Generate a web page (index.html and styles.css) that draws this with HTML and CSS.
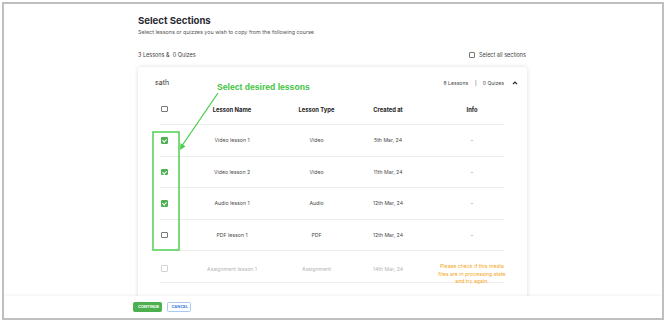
FILE: index.html
```html
<!DOCTYPE html>
<html>
<head>
<meta charset="utf-8">
<link rel="stylesheet" href="styles.css">
</head>
<body>
<div class="frame">
  <div class="main">
    <div class="col">
      <h1 class="title">Select Sections</h1>
      <p class="subtitle">Select lessons or quizzes you wish to copy from the following course</p>
      <div class="summary">
        <span>3 Lessons &amp;&nbsp; 0 Quizes</span>
        <label class="select-all"><span class="cb"></span>Select all sections</label>
      </div>
      <div class="card">
        <div class="card-head">
          <span class="sec-name">sath</span>
          <div class="counts">
            <span>8 Lessons</span><span class="sep">|</span><span>0 Quizes</span>
            <svg class="caret" width="6" height="4" viewBox="0 0 6 4"><path d="M1 3.2 L3 1.2 L5 3.2" fill="none" stroke="#222" stroke-width="1.2"/></svg>
          </div>
        </div>
        <div class="table">
          <div class="row head">
            <span class="c1"><span class="cb"></span></span>
            <span>Lesson Name</span><span>Lesson Type</span><span>Created at</span><span>Info</span>
          </div>
          <div class="row">
            <span class="c1"><span class="cb on"></span></span>
            <span>Video lesson 1</span><span>Video</span><span>5th Mar, 24</span><span>-</span>
          </div>
          <div class="row">
            <span class="c1"><span class="cb on"></span></span>
            <span>Video lesson 2</span><span>Video</span><span>11th Mar, 24</span><span>-</span>
          </div>
          <div class="row">
            <span class="c1"><span class="cb on"></span></span>
            <span>Audio lesson 1</span><span>Audio</span><span>12th Mar, 24</span><span>-</span>
          </div>
          <div class="row">
            <span class="c1"><span class="cb"></span></span>
            <span>PDF lesson 1</span><span>PDF</span><span>12th Mar, 24</span><span>-</span>
          </div>
          <div class="row disabled">
            <span class="c1"><span class="cb"></span></span>
            <span>Assignment lesson 1</span><span>Assignment</span><span>14th Mar, 24</span>
            <span class="warn">Please check if this media<br>files are in processing state<br>and try again.</span>
          </div>
        </div>
      </div>
    </div>
  </div>
  <div class="footer">
    <button class="btn primary">CONTINUE</button>
    <button class="btn outline">CANCEL</button>
  </div>
</div>
<svg class="annot" width="670" height="322" viewBox="0 0 670 322">
  <text x="217" y="90" class="annot-text">Select desired lessons</text>
  <line x1="218" y1="93" x2="182.5" y2="145" stroke="#4ccd4c" stroke-width="1.3"/>
  <path d="M180 150 L180.5 143 L185.5 146.5 Z" fill="#4ccd4c"/>
  <rect x="153" y="132" width="26" height="118" fill="none" stroke="#5ad35a" stroke-width="1.6"/>
</svg>
</body>
</html>
```

FILE: styles.css
```css
* { box-sizing: border-box; }
html, body { margin: 0; padding: 0; }
body {
  position: relative;
  width: 670px;
  height: 322px;
  background: #fff;
  font-family: Inter, "Noto Sans", sans-serif;
  color: #444;
  overflow: hidden;
}
.frame {
  position: absolute;
  left: 2px;
  top: 2px;
  width: 662px;
  height: 318px;
  border: 2px solid #bfbfbf;
  display: flex;
  flex-direction: column;
  overflow: hidden;
  background: #fff;
}
.main {
  flex: 1;
  overflow: hidden;
  padding: 11px 0 0 134px;
}
.col { width: 389px; }
.title {
  margin: 0;
  font-size: 9.6px;
  line-height: 12px;
  font-weight: 700;
  color: #2a2a33;
}
.subtitle {
  margin: 1px 0 0;
  font-size: 5.4px;
  line-height: 8px;
  color: #555;
}
.summary {
  margin-top: 15px;
  display: flex;
  justify-content: space-between;
  align-items: center;
  font-size: 5.5px;
  line-height: 8px;
  color: #444;
}
.select-all { display: flex; align-items: center; gap: 4px; margin-right: 1px; }
.cb {
  display: inline-block;
  width: 6.5px;
  height: 6.5px;
  border: 1px solid #777;
  border-radius: 1px;
  background: #fff;
  position: relative;
}
.cb.on {
  background: #4caf50;
  border-color: #4caf50;
}
.cb.on::after {
  content: "";
  position: absolute;
  left: 1.3px;
  top: 0.1px;
  width: 1.6px;
  height: 3.2px;
  border: solid #fff;
  border-width: 0 1px 1px 0;
  transform: rotate(45deg);
}
.card {
  margin-top: 8px;
  background: #fff;
  border-radius: 3px;
  box-shadow: 0 0 4px rgba(0,0,0,0.14);
  padding: 12px 23px 20px 22px;
}
.card-head {
  display: flex;
  justify-content: space-between;
  align-items: center;
  margin-left: -5px;
  margin-right: -14px;
  line-height: 8px;
}
.sec-name { font-size: 7px; color: #333333; }
.counts { display: flex; align-items: center; font-size: 5.1px; color: #444; }
.counts .sep { margin: 0 6px 0 7px; }
.caret { margin-left: 8px; }
.table { margin-top: 7px; }
.row {
  display: grid;
  grid-template-columns: 9px 126px 43px 100px 68px;
  justify-items: center;
  align-items: center;
  height: 31.6px;
  border-bottom: 1px solid #ececec;
  font-size: 5.2px;
  color: #4a4a4a;
}
.row.head { font-weight: 700; font-size: 5.8px; color: #222222; height: 31px; }
.row .c1 { justify-self: start; display: flex; margin-left: 1px; }
.row.disabled { color: #b5b5b5; border-bottom-color: #f0f0f0; }
.row.disabled .cb { border-color: #d4d4d4; }
.warn {
  color: #f5a623;
  text-align: center;
  line-height: 7.7px;
  white-space: nowrap;
  align-self: start;
  margin-top: 11.5px;
}
.footer {
  height: 22px;
  flex: none;
  display: flex;
  align-items: flex-start;
  gap: 5px;
  padding: 5.5px 0 0 129px;
  background: #fff;
  box-shadow: 0 -1px 3px rgba(0,0,0,0.06);
  position: relative;
}
.btn {
  font-family: Inter, sans-serif;
  font-size: 4px;
  font-weight: 700;
  height: 10.5px;
  padding: 0 4px;
  border-radius: 1.5px;
  cursor: pointer;
  line-height: 1;
}
.btn.primary { background: #4caf50; color: #fff; border: 1px solid #4caf50; width: 28.5px; }
.btn.outline { background: #fff; color: #3d7be0; border: 1.2px solid #a9c8f5; width: 24px; }
.annot {
  position: absolute;
  left: 0;
  top: 0;
  pointer-events: none;
}
.annot-text {
  font-family: "Liberation Sans", Arial, sans-serif;
  font-weight: 700;
  font-size: 8.6px;
  fill: #3fc43f;
}
```
